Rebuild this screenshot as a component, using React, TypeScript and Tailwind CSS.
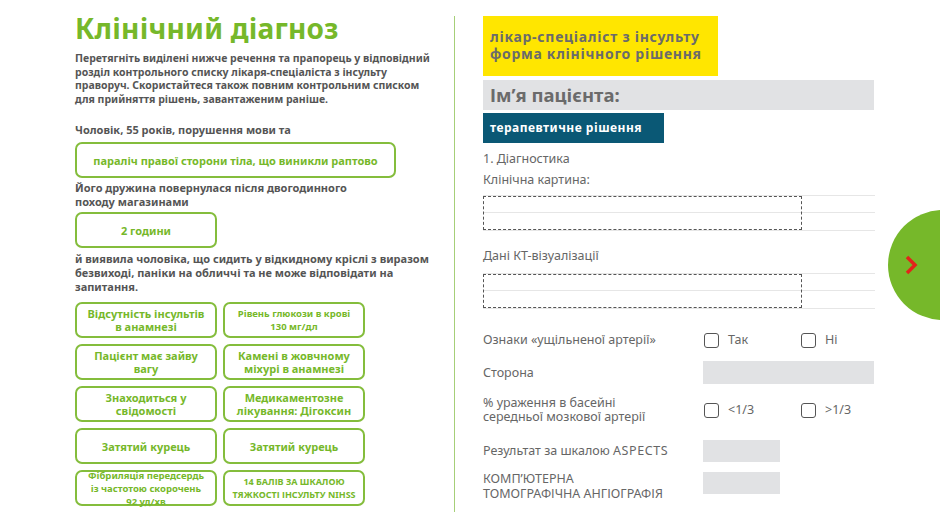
import React from "react";

const green = "text-[#76b82a]";

function GBox({ children, cls = "" }: { children: React.ReactNode; cls?: string }) {
  return (
    <div
      className={`flex items-center justify-center text-center rounded-[7px] border-2 border-[#84bd3c] text-[#76b82a] font-bold leading-[13px] ${cls}`}
    >
      {children}
    </div>
  );
}

function Field() {
  return (
    <div className="relative w-[392px]">
      <div className="h-[18px] border-t border-b border-[#e6e6e6]" />
      <div className="h-[18px] border-b border-[#e6e6e6]" />
      <div className="absolute left-0 top-[1px] bottom-[1px] w-[319px] border border-dashed border-[#555]" />
    </div>
  );
}

function Check({ label }: { label: string }) {
  return (
    <div className="flex items-center gap-[9px]">
      <div className="w-[15px] h-[15px] rounded-[3px] border border-[#555]" />
      <span>{label}</span>
    </div>
  );
}

export default function App() {
  return (
    <div
      className="relative w-[940px] h-[528px] bg-white overflow-hidden flex"
      style={{ fontFamily: '"Noto Sans", "Open Sans", sans-serif' }}
    >
      {/* Left column */}
      <div className="w-[454px] pl-[75px] pt-[9px] text-[#555]">
        <h1 className={`text-[28px] font-bold leading-[38px] ${green} tracking-[0.2px]`}>Клінічний діагноз</h1>
        <p className="mt-[5px] text-[10.5px] font-bold leading-[13.5px] whitespace-nowrap">
          Перетягніть виділені нижче речення та прапорець у відповідний
          <br />
          розділ контрольного списку лікаря-спеціаліста з інсульту
          <br />
          праворуч. Скористайтеся також повним контрольним списком
          <br />
          для прийняття рішень, завантаженим раніше.
        </p>
        <p className="mt-[17px] text-[11px] font-bold leading-[14px]">Чоловік, 55 років, порушення мови та</p>
        <GBox cls="mt-[5px] w-[321px] h-[36px] text-[11px]">параліч правої сторони тіла, що виникли раптово</GBox>
        <p className="mt-[3px] text-[11px] font-bold leading-[14px]">
          Його дружина повернулася після двогодинного
          <br />
          походу магазинами
        </p>
        <GBox cls="mt-[3px] w-[142px] h-[36px] text-[11px]">2 години</GBox>
        <p className="mt-[4px] text-[11px] font-bold leading-[14px] whitespace-nowrap">
          й виявила чоловіка, що сидить у відкидному кріслі з виразом
          <br />
          безвиході, паніки на обличчі та не може відповідати на
          <br />
          запитання.
        </p>
        <div className="mt-[8px] grid grid-cols-[142px_142px] gap-x-[6px] gap-y-[6px] auto-rows-[36px]">
          <GBox cls="text-[11px]">Відсутність інсультів<br />в анамнезі</GBox>
          <GBox cls="text-[9.5px] leading-[12px]">Рівень глюкози в крові<br />130 мг/дл</GBox>
          <GBox cls="text-[11px]">Пацієнт має зайву<br />вагу</GBox>
          <GBox cls="text-[11px]">Камені в жовчному<br />міхурі в анамнезі</GBox>
          <GBox cls="text-[11px]">Знаходиться у<br />свідомості</GBox>
          <GBox cls="text-[11px]">Медикаментозне<br />лікування: Дігоксин</GBox>
          <GBox cls="text-[11px]">Затятий курець</GBox>
          <GBox cls="text-[11px]">Затятий курець</GBox>
          <GBox cls="text-[9.5px] leading-[10px]">Фібриляція передсердь<br />із частотою скорочень<br />92 уд/хв</GBox>
          <GBox cls="text-[9px] leading-[11px]">14 БАЛІВ ЗА ШКАЛОЮ<br />ТЯЖКОСТІ ІНСУЛЬТУ NIHSS</GBox>
        </div>
      </div>

      {/* Divider */}
      <div className="mt-[16px] w-px h-[496px] bg-[#a6cf78]" />

      {/* Right column */}
      <div className="pl-[28px] pt-[16px] text-[#666] text-[12.5px] leading-[14px]">
        <div className="w-[235px] h-[60px] bg-[#ffe600] pl-[7px] pt-[12px] text-[14px] font-bold leading-[17px] tracking-[0.7px] text-[#6b6b6b]">
          лікар-спеціаліст з інсульту
          <br />
          форма клінічного рішення
        </div>
        <div className="mt-[4px] w-[391px] h-[30px] bg-[#e1e2e4] pl-[7px] flex items-center text-[18.5px] font-bold text-[#6b6b6b]">
          Ім’я пацієнта:
        </div>
        <div className="mt-[3px] w-[181px] h-[30px] bg-[#0a5875] pl-[7px] flex items-center text-[12px] tracking-[0.5px] font-bold text-white">
          терапевтичне рішення
        </div>
        <div className="mt-[9px]">1. Діагностика</div>
        <div className="mt-[7px]">Клінічна картина:</div>
        <div className="mt-[8px]">
          <Field />
        </div>
        <div className="mt-[18px]">Дані КТ-візуалізації</div>
        <div className="mt-[10px]">
          <Field />
        </div>
        <div className="mt-[22px] flex items-center h-[18px]">
          <div className="w-[221px]">Ознаки «ущільненої артерії»</div>
          <div className="w-[97px]"><Check label="Так" /></div>
          <Check label="Ні" />
        </div>
        <div className="mt-[12px] flex items-center h-[23px]">
          <div className="w-[220px]">Сторона</div>
          <div className="w-[171px] h-[23px] bg-[#e1e2e4]" />
        </div>
        <div className="mt-[12px] flex items-center h-[28px]">
          <div className="w-[221px] leading-[14.5px]">
            % ураження в басейні
            <br />
            середньої мозкової артерії
          </div>
          <div className="w-[97px]"><Check label="<1/3" /></div>
          <Check label=">1/3" />
        </div>
        <div className="mt-[16px] flex items-center h-[22px]">
          <div className="w-[220px]">
            Результат за шкалою <span className="tracking-[0.6px]">ASPECTS</span>
          </div>
          <div className="w-[77px] h-[22px] bg-[#e1e2e4]" />
        </div>
        <div className="mt-[10px] flex items-start h-[28px]">
          <div className="w-[220px] leading-[14.5px]">
            КОМП’ЮТЕРНА
            <br />
            ТОМОГРАФІЧНА АНГІОГРАФІЯ
          </div>
          <div className="w-[77px] h-[22px] bg-[#e1e2e4]" />
        </div>
      </div>

      {/* Next button */}
      <div className="absolute left-[888px] top-[210px] w-[110px] h-[110px] rounded-full bg-[#76b82a] flex items-center pl-[16px]">
        <svg width="14" height="20" viewBox="0 0 14 20">
          <path d="M3 2 L11 10 L3 18" fill="none" stroke="#e3241b" strokeWidth="3.5" strokeLinejoin="miter" />
        </svg>
      </div>
    </div>
  );
}
